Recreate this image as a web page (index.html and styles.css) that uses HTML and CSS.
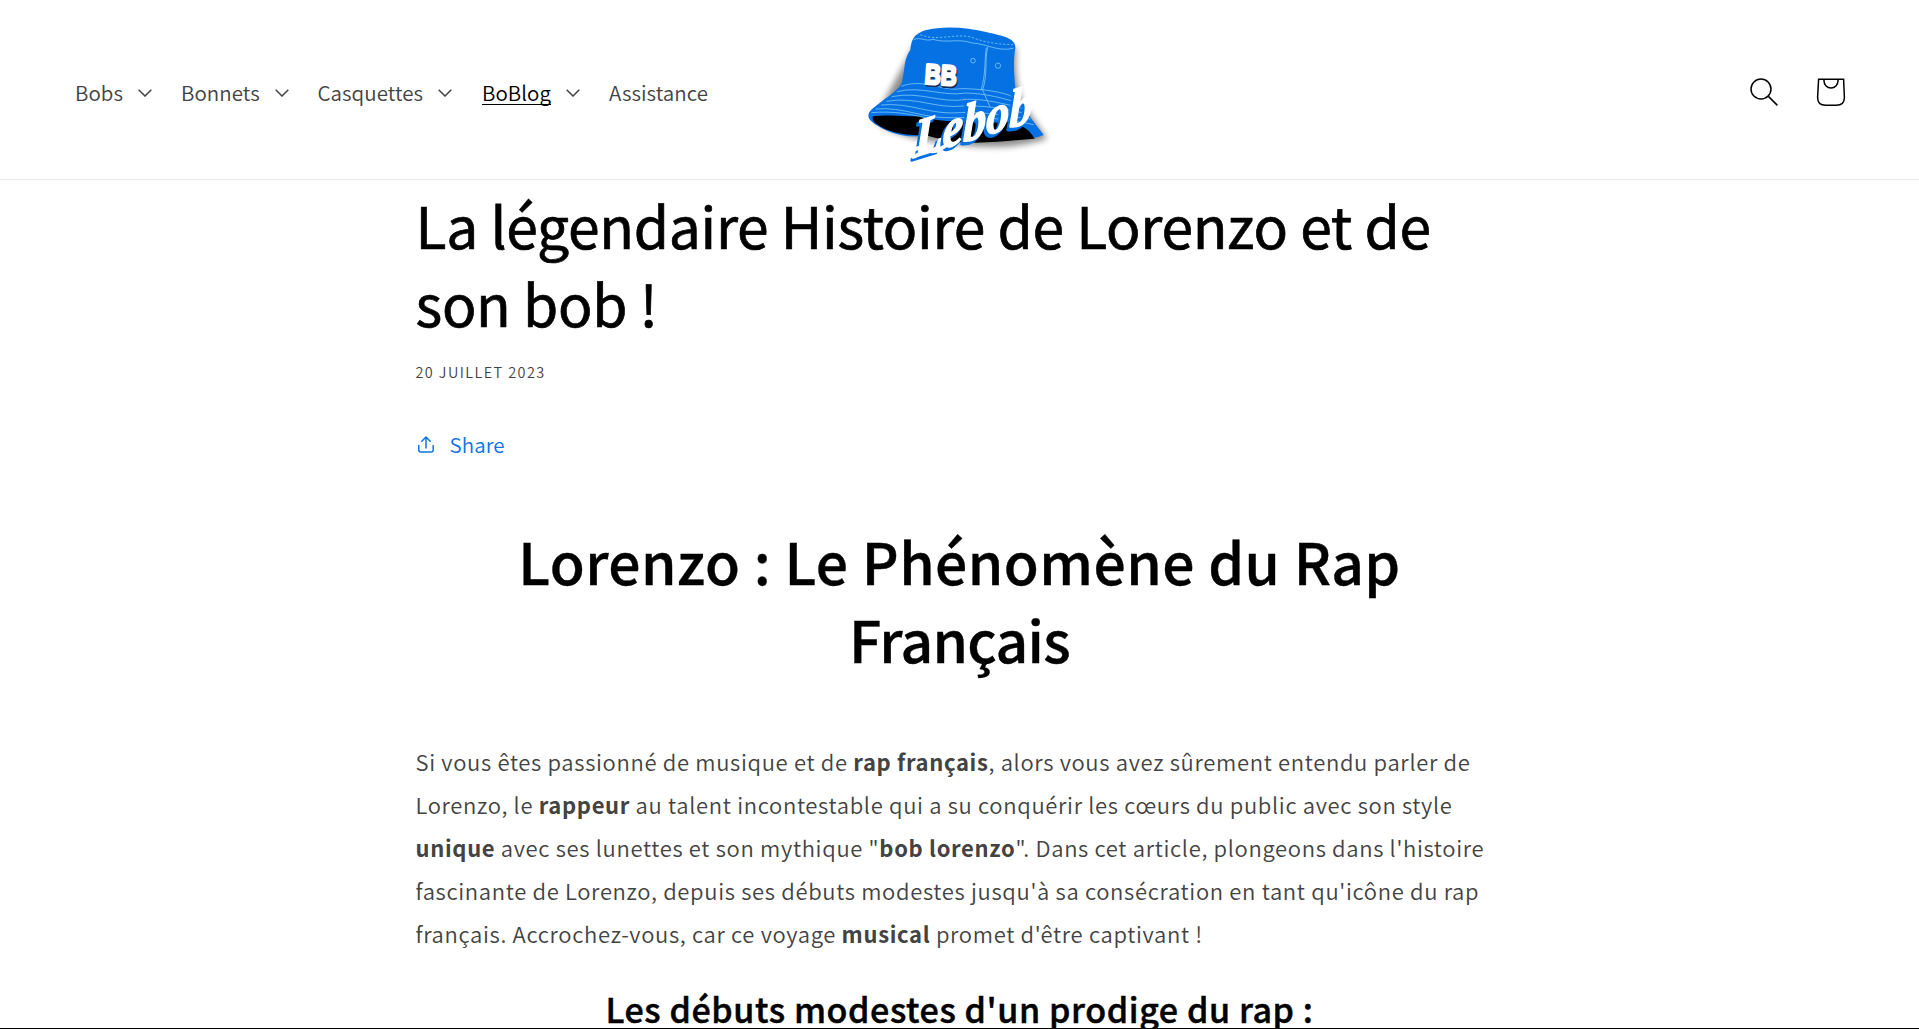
FILE: index.html
```html
<!DOCTYPE html>
<html lang="fr">
<head>
<meta charset="utf-8">
<title>La légendaire Histoire de Lorenzo et de son bob !</title>
<link rel="stylesheet" href="styles.css">
</head>
<body>
<header class="header">
  <nav class="nav">
    <a class="nav-item nav-bobs"><span>Bobs</span><svg class="caret" viewBox="0 0 14 8"><path d="M.7.7 7 7 13.3.7"/></svg></a>
    <a class="nav-item nav-bonnets"><span>Bonnets</span><svg class="caret" viewBox="0 0 14 8"><path d="M.7.7 7 7 13.3.7"/></svg></a>
    <a class="nav-item nav-casquettes"><span>Casquettes</span><svg class="caret" viewBox="0 0 14 8"><path d="M.7.7 7 7 13.3.7"/></svg></a>
    <a class="nav-item nav-blog"><span class="active">BoBlog</span><svg class="caret" viewBox="0 0 14 8"><path d="M.7.7 7 7 13.3.7"/></svg></a>
    <a class="nav-item"><span>Assistance</span></a>
  </nav>
  <svg class="logo" viewBox="32 35 600 420" role="img" aria-label="Lebob">
    <defs>
      <filter id="soft" x="-20%" y="-20%" width="140%" height="140%"><feGaussianBlur stdDeviation="9"/></filter>
    </defs>
    <path class="hat-shadow" d="M200 90Q300 45 498 115Q490 200 515 272L590 385Q480 420 340 405Q140 390 70 330Z" filter="url(#soft)"/>
    <path class="hat-blue" d="M55 310C62 288 150 243 155 215C166 165 160 150 180 118C185 85 190 73 225 60C285 45 350 52 410 66C460 77 496 85 495 112C487 153 492 232 501 263C522 302 557 341 580 374C548 388 520 385 490 384L250 372C165 390 110 365 72 340Q50 326 55 310Z"/>
    <path class="hat-under" d="M68 318C110 312 150 320 205 317C240 333 400 342 470 335C515 340 538 360 553 385C480 390 420 400 340 396C300 396 255 382 222 373C170 379 110 365 80 342Q63 330 68 318Z"/>
    <g class="seams">
      <path d="M190 88C212 78 222 95 248 87C290 100 325 83 365 98C410 100 440 125 489 114"/>
      <path class="dash" d="M210 73C265 95 320 65 370 83C410 98 450 102 488 103"/>
      <path d="M412 110C402 155 413 190 397 239L419 290M408 112C402 155 407 190 392 240"/>
      <path d="M153 228C220 202 280 245 330 235C390 235 460 243 502 265"/>
      <path d="M140 244C210 225 280 260 345 248C410 249 460 265 512 279"/>
      <path d="M124 259C210 241 270 281 350 267C400 265 460 280 518 294"/>
      <path d="M108 273C200 257 250 296 340 287C400 285 450 293 525 309"/>
      <path d="M92 284C180 275 240 315 330 307C400 304 460 315 540 326"/>
      <path d="M76 296C160 288 220 327 310 322C400 320 470 325 550 343"/>
      <path d="M63 307C130 301 180 312 225 322"/>
      <circle cx="368" cy="151" r="7"/>
      <circle cx="443" cy="166" r="8"/>
    </g>
    <text class="badge badge-shadow" x="225" y="224" transform="rotate(4 222 218)" textLength="96" lengthAdjust="spacingAndGlyphs">BB</text>
    <text class="badge" x="222" y="219" transform="rotate(4 219 218)" textLength="96" lengthAdjust="spacingAndGlyphs">BB</text>
    <g transform="translate(192 441) rotate(-17) skewX(-18)">
      <text class="script script-shadow" x="-7" y="6" textLength="370" lengthAdjust="spacingAndGlyphs">Lebob</text>
      <text class="script" x="0" y="0" textLength="370" lengthAdjust="spacingAndGlyphs">Lebob</text>
      <path class="swash" d="M10-4Q-10 2-8-16Q5-34 50-5Q75 8 110-12"/>
    </g>
  </svg>
  <div class="actions">
    <svg class="action-icon" viewBox="0 0 30 30"><circle cx="12" cy="12" r="10"/><path d="m19.4 19.4 9 9"/></svg>
    <svg class="action-icon" viewBox="0 0 30 30"><path d="M2.6 2.2H27.6L28.4 20.5Q28.4 28.3 20.2 28.3H9.6Q1.6 28.3 1.6 20.5ZM8 2.2V4A7 7 0 0 0 22 4V2.2"/></svg>
  </div>
</header>
<main class="article">
  <h1 class="title">La légendaire Histoire de Lorenzo et de<br>son bob !</h1>
  <time class="date">20 JUILLET 2023</time>
  <a class="share"><svg class="share-icon" viewBox="0 0 16 17"><path d="M.8 9.5V14Q.8 16 2.8 16H13.2Q15.2 16 15.2 14V9.5M8 12V1.2M3.8 5.2 8 1l4.2 4.2"/></svg><span>Share</span></a>
  <h2 class="headline"><span class="headline-first">Lorenzo : Le Phénomène du Rap</span><br><span class="headline-second">Français</span></h2>
  <p class="intro">
    Si vous êtes passionné de musique et de <b>rap français</b>, alors vous avez sûrement entendu parler de<br>
    Lorenzo, le <b>rappeur</b> au talent incontestable qui a su conquérir les cœurs du public avec son style<br>
    <b>unique</b> avec ses lunettes et son mythique "<b>bob lorenzo</b>". Dans cet article, plongeons dans l'histoire<br>
    fascinante de Lorenzo, depuis ses débuts modestes jusqu'à sa consécration en tant qu'icône du rap<br>
    français. Accrochez-vous, car ce voyage <b>musical</b> promet d'être captivant !
  </p>
  <h3 class="subhead">Les débuts modestes d'un prodige du rap :</h3>
</main>
</body>
</html>
```
FILE: styles.css
```css
* { box-sizing: border-box; }

body {
  margin: 0;
  height: 1029px;
  overflow: hidden;
  border-bottom: 1px solid #000;
  background: #fff;
  color: #434343;
  font-family: "Noto Sans CJK SC", "Noto Sans CJK JP", "Noto Sans", sans-serif;
}

.header {
  display: grid;
  grid-template-columns: 1fr 200px 1fr;
  align-items: center;
  height: 180px;
  padding: 0 73px 0 75px;
  border-bottom: 1px solid #ebebeb;
}

.nav { display: flex; padding-top: 4px; }

.nav-item {
  display: flex;
  align-items: center;
  gap: 15px;
  font-size: 20.5px;
  font-weight: 350;
  line-height: 28px;
  letter-spacing: .05px;
  white-space: nowrap;
}

.nav-bobs { width: 106px; }
.nav-bonnets { width: 136.5px; }
.nav-casquettes { width: 164.5px; }
.nav-blog { width: 127px; }

.active {
  height: 28px;
  color: #000;
  background: linear-gradient(#000, #000) 0 26px / 100% 1px no-repeat;
}

.caret { width: 14px; height: 8px; margin-top: 2px; fill: none; stroke: #434343; stroke-width: 1.5; }

.logo { width: 200px; height: 140px; margin-top: 5px; overflow: visible; }
.hat-shadow { fill: #000; opacity: .45; }
.hat-blue { fill: #0671e3; }
.hat-under { fill: #000; }
.seams { fill: none; stroke: #78c5f7; stroke-width: 2.5; }
.dash { stroke-dasharray: 7 5; }
.badge { fill: #fff; stroke: #fff; stroke-width: 8; stroke-linejoin: round; font: bold 84px "Liberation Sans", sans-serif; }
.badge-shadow { fill: #102c55; stroke: #102c55; }
.script { fill: #fff; stroke: #fff; stroke-width: 4; stroke-linejoin: round; font: italic bold 155px "Liberation Serif", serif; }
.script-shadow { fill: #0671e3; stroke: #0671e3; stroke-width: 8; }
.swash { fill: none; stroke: #fff; stroke-width: 12; stroke-linecap: round; }

.actions { display: flex; justify-content: flex-end; gap: 37px; padding-top: 5px; }
.action-icon { width: 30px; height: 30px; fill: none; stroke: #000; stroke-width: 1.5; }

.article { width: 1088px; margin: 0 auto; }

.title, .headline, .subhead { margin: 0; color: #000; white-space: nowrap; }

.title {
  padding-top: 5px;
  font-size: 57px;
  font-weight: 400;
  line-height: 78px;
  letter-spacing: -.3px;
  -webkit-text-stroke: .7px #000;
}

.date {
  display: block;
  margin-top: 19px;
  font-size: 14.5px;
  font-weight: 350;
  line-height: 24px;
  letter-spacing: 1.4px;
}

.share {
  display: flex;
  align-items: center;
  gap: 16px;
  margin-top: 43px;
  padding-left: 2px;
  color: #0a74e8;
  font-size: 20.5px;
  font-weight: 350;
  line-height: 34px;
  letter-spacing: .1px;
}

.share-icon { width: 16px; height: 17px; fill: none; stroke: currentColor; stroke-width: 1.5; stroke-linecap: round; stroke-linejoin: round; }

.headline {
  margin-top: 60px;
  font-size: 57px;
  font-weight: 500;
  line-height: 78px;
  text-align: center;
  -webkit-text-stroke: .4px #000;
}

.headline-first { letter-spacing: .45px; }
.headline-second { letter-spacing: -.7px; }

.intro {
  margin: 63px 0 0;
  font-size: 22px;
  font-weight: 350;
  line-height: 43.1px;
  letter-spacing: .665px;
  white-space: nowrap;
}

.subhead {
  margin-top: 31px;
  font-size: 34px;
  font-weight: 500;
  line-height: 46px;
  letter-spacing: .6px;
  text-align: center;
  -webkit-text-stroke: .5px #000;
}
```
